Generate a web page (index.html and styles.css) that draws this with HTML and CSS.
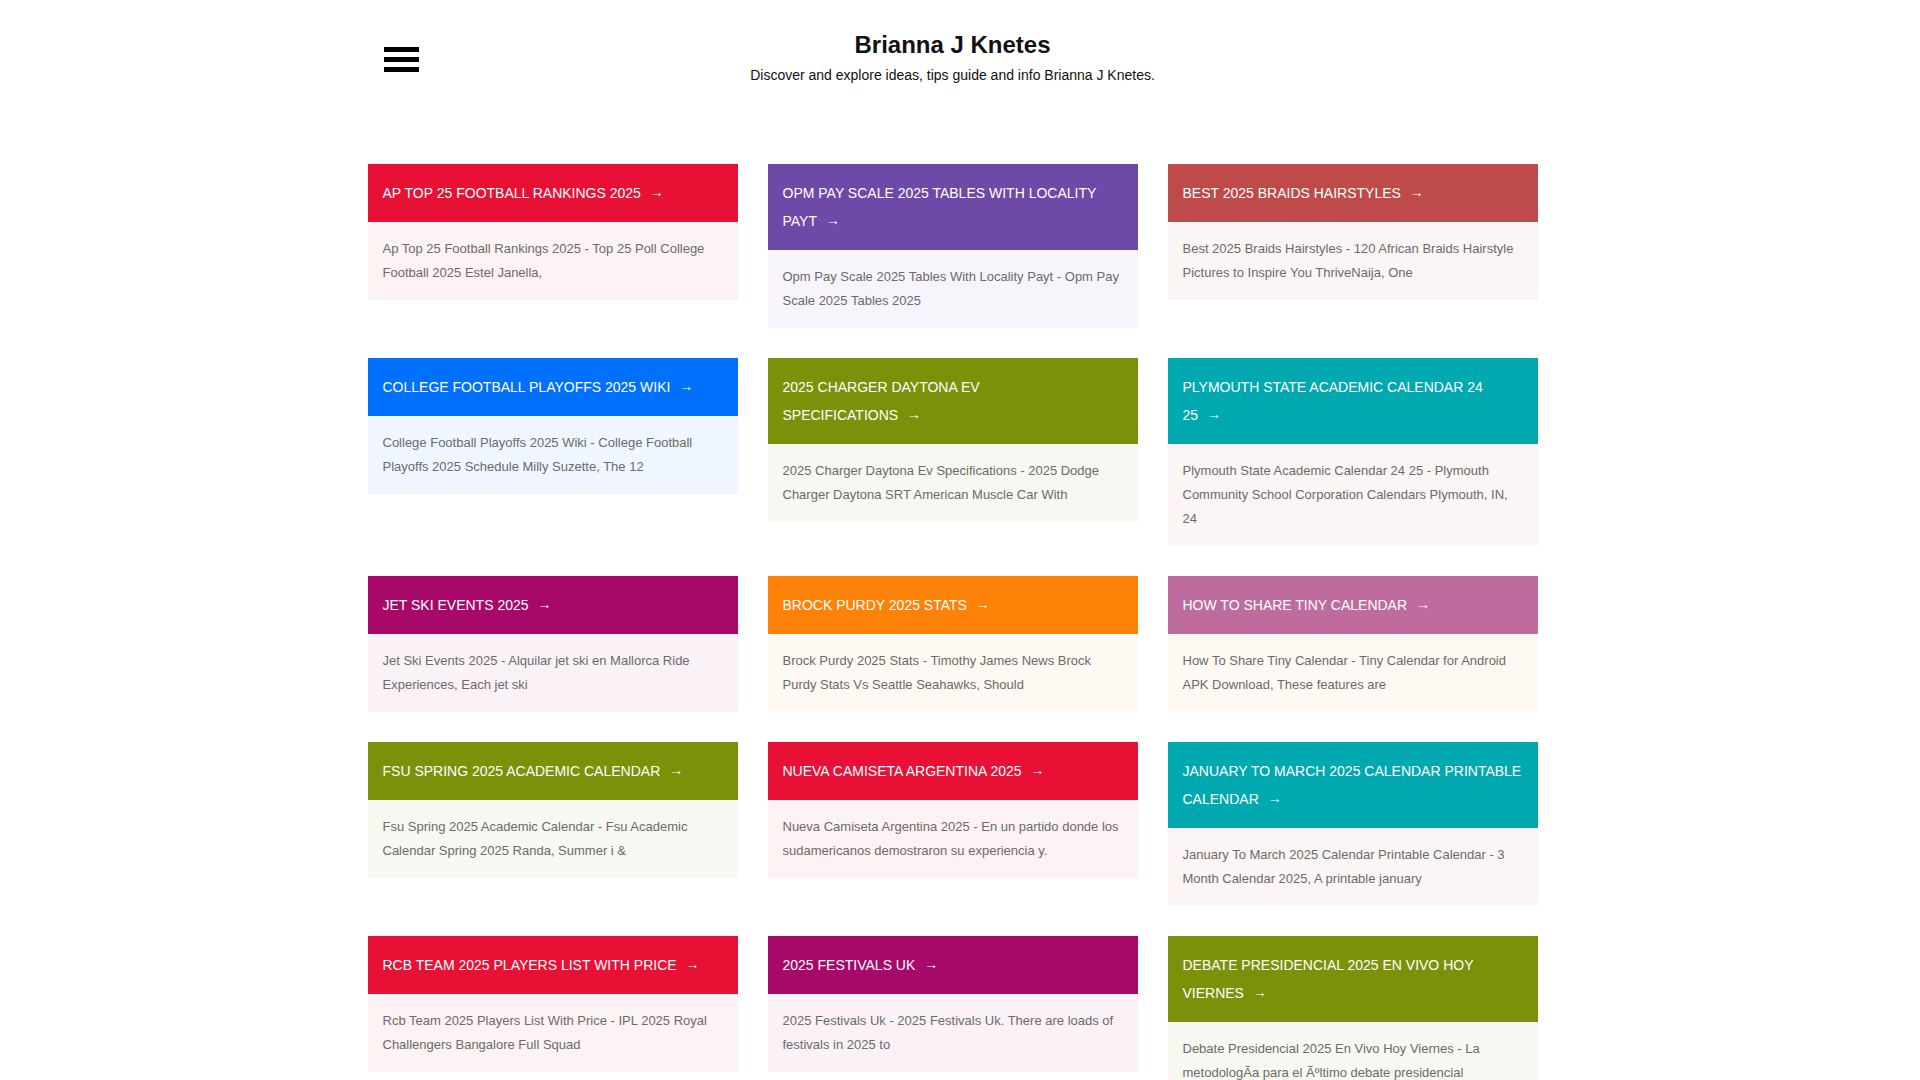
FILE: index.html
```html
<!DOCTYPE html>
<html lang="en">

<head>
    <meta charset="UTF-8">
    <meta name="viewport" content="width=device-width, initial-scale=1.0">
    <title>Brianna J Knetes</title>
    <link rel="stylesheet" href="styles.css">
</head>

<body>

    <header class="site-header">
        <div class="container header-inner">
            <a class="menu-toggle" href="#">
                <span></span>
                <span></span>
                <span></span>
            </a>
            <div class="brand">
                <h1 class="site-title">Brianna J Knetes</h1>
                <p class="site-desc">Discover and explore ideas, tips guide and info Brianna J Knetes.</p>
            </div>
        </div>
    </header>

    <main class="container">
        <div class="posts">

            <article class="card red">
                <a class="card-title" href="#">AP TOP 25 FOOTBALL RANKINGS 2025&nbsp;<span class="arrow">&rarr;</span></a>
                <p class="card-text">Ap Top 25 Football Rankings 2025 - Top 25 Poll College Football 2025 Estel Janella,</p>
            </article>

            <article class="card purple">
                <a class="card-title" href="#">OPM PAY SCALE 2025 TABLES WITH LOCALITY PAYT&nbsp;<span class="arrow">&rarr;</span></a>
                <p class="card-text">Opm Pay Scale 2025 Tables With Locality Payt - Opm Pay Scale 2025 Tables 2025</p>
            </article>

            <article class="card brick">
                <a class="card-title" href="#">BEST 2025 BRAIDS HAIRSTYLES&nbsp;<span class="arrow">&rarr;</span></a>
                <p class="card-text">Best 2025 Braids Hairstyles - 120 African Braids Hairstyle Pictures to Inspire You ThriveNaija, One</p>
            </article>

            <article class="card blue">
                <a class="card-title" href="#">COLLEGE FOOTBALL PLAYOFFS 2025 WIKI&nbsp;<span class="arrow">&rarr;</span></a>
                <p class="card-text">College Football Playoffs 2025 Wiki - College Football Playoffs 2025 Schedule Milly Suzette, The 12</p>
            </article>

            <article class="card olive">
                <a class="card-title" href="#">2025 CHARGER DAYTONA EV SPECIFICATIONS&nbsp;<span class="arrow">&rarr;</span></a>
                <p class="card-text">2025 Charger Daytona Ev Specifications - 2025 Dodge Charger Daytona SRT American Muscle Car With</p>
            </article>

            <article class="card teal">
                <a class="card-title" href="#">PLYMOUTH STATE ACADEMIC CALENDAR 24 25&nbsp;<span class="arrow">&rarr;</span></a>
                <p class="card-text">Plymouth State Academic Calendar 24 25 - Plymouth Community School Corporation Calendars Plymouth, IN, 24</p>
            </article>

            <article class="card magenta">
                <a class="card-title" href="#">JET SKI EVENTS 2025&nbsp;<span class="arrow">&rarr;</span></a>
                <p class="card-text">Jet Ski Events 2025 - Alquilar jet ski en Mallorca Ride Experiences, Each jet ski</p>
            </article>

            <article class="card orange">
                <a class="card-title" href="#">BROCK PURDY 2025 STATS&nbsp;<span class="arrow">&rarr;</span></a>
                <p class="card-text">Brock Purdy 2025 Stats - Timothy James News Brock Purdy Stats Vs Seattle Seahawks, Should</p>
            </article>

            <article class="card pink">
                <a class="card-title" href="#">HOW TO SHARE TINY CALENDAR&nbsp;<span class="arrow">&rarr;</span></a>
                <p class="card-text">How To Share Tiny Calendar - Tiny Calendar for Android APK Download, These features are</p>
            </article>

            <article class="card olive">
                <a class="card-title" href="#">FSU SPRING 2025 ACADEMIC CALENDAR&nbsp;<span class="arrow">&rarr;</span></a>
                <p class="card-text">Fsu Spring 2025 Academic Calendar - Fsu Academic Calendar Spring 2025 Randa, Summer i &amp;</p>
            </article>

            <article class="card red">
                <a class="card-title" href="#">NUEVA CAMISETA ARGENTINA 2025&nbsp;<span class="arrow">&rarr;</span></a>
                <p class="card-text">Nueva Camiseta Argentina 2025 - En un partido donde los sudamericanos demostraron su experiencia y.</p>
            </article>

            <article class="card teal">
                <a class="card-title" href="#">JANUARY TO MARCH 2025 CALENDAR PRINTABLE CALENDAR&nbsp;<span class="arrow">&rarr;</span></a>
                <p class="card-text">January To March 2025 Calendar Printable Calendar - 3 Month Calendar 2025, A printable january</p>
            </article>

            <article class="card red">
                <a class="card-title" href="#">RCB TEAM 2025 PLAYERS LIST WITH PRICE&nbsp;<span class="arrow">&rarr;</span></a>
                <p class="card-text">Rcb Team 2025 Players List With Price - IPL 2025 Royal Challengers Bangalore Full Squad</p>
            </article>

            <article class="card magenta">
                <a class="card-title" href="#">2025 FESTIVALS UK&nbsp;<span class="arrow">&rarr;</span></a>
                <p class="card-text">2025 Festivals Uk - 2025 Festivals Uk. There are loads of festivals in 2025 to</p>
            </article>

            <article class="card olive">
                <a class="card-title" href="#">DEBATE PRESIDENCIAL 2025 EN VIVO HOY VIERNES&nbsp;<span class="arrow">&rarr;</span></a>
                <p class="card-text">Debate Presidencial 2025 En Vivo Hoy Viernes - La metodologÃ&shy;a para el Ãºltimo debate presidencial</p>
            </article>

        </div>
    </main>

</body>

</html>
```

FILE: styles.css
```css
* {
    padding: 0;
    margin: 0;
    box-sizing: border-box;
}

body {
    background-color: #ffffff;
    font-family: "Liberation Sans", Arial, sans-serif;
    color: #666666;
    /* room the scrollbar takes in the original page */
    padding-right: 15px;
}

a {
    text-decoration: none;
}

.container {
    width: 1170px;
    margin: 0 auto;
}

/* header */

.site-header {
    padding-top: 30px;
    padding-bottom: 79px;
}

.header-inner {
    position: relative;
    text-align: center;
}

.menu-toggle {
    position: absolute;
    left: 16px;
    top: 17px;
    width: 35px;
    height: 25px;
    display: flex;
    flex-direction: column;
    justify-content: space-between;
}

.menu-toggle span {
    display: block;
    height: 5px;
    background-color: #000000;
}

.site-title {
    font-size: 24px;
    line-height: 30px;
    font-weight: bold;
    color: #111111;
    margin-bottom: 5px;
}

.site-desc {
    font-size: 14px;
    line-height: 20px;
    color: #111111;
}

/* posts */

.posts {
    display: grid;
    grid-template-columns: repeat(3, 1fr);
    column-gap: 30px;
    row-gap: 30px;
    align-items: start;
    padding-bottom: 30px;
}

.card-title {
    display: block;
    padding: 15px;
    font-size: 14px;
    line-height: 28px;
    color: #ffffff;
}

.arrow {
    margin-left: 8px;
    font-size: 14px;
    position: relative;
    top: -1px;
    left: -3px;
}

.card-text {
    padding: 15px;
    font-size: 13px;
    line-height: 24px;
    color: #6b6b6b;
}

.red .card-title { background-color: #e91035; }
.red .card-text { background-color: #fdf2f4; }

.purple .card-title { background-color: #6d49a8; }
.purple .card-text { background-color: #f7f5fb; }

.brick .card-title { background-color: #bf4a4a; }
.brick .card-text { background-color: #fbf5f5; }

.blue .card-title { background-color: #0070fe; }
.blue .card-text { background-color: #eff6ff; }

.olive .card-title { background-color: #7b910a; }
.olive .card-text { background-color: #f7f8f2; }

.teal .card-title { background-color: #00a9b0; }
.teal .card-text { background-color: #fbf5f5; }

.magenta .card-title { background-color: #a8086a; }
.magenta .card-text { background-color: #faf2f7; }

.orange .card-title { background-color: #fe8208; }
.orange .card-text { background-color: #fef9f3; }

.pink .card-title { background-color: #be6b9d; }
.pink .card-text { background-color: #fef9f3; }
```
